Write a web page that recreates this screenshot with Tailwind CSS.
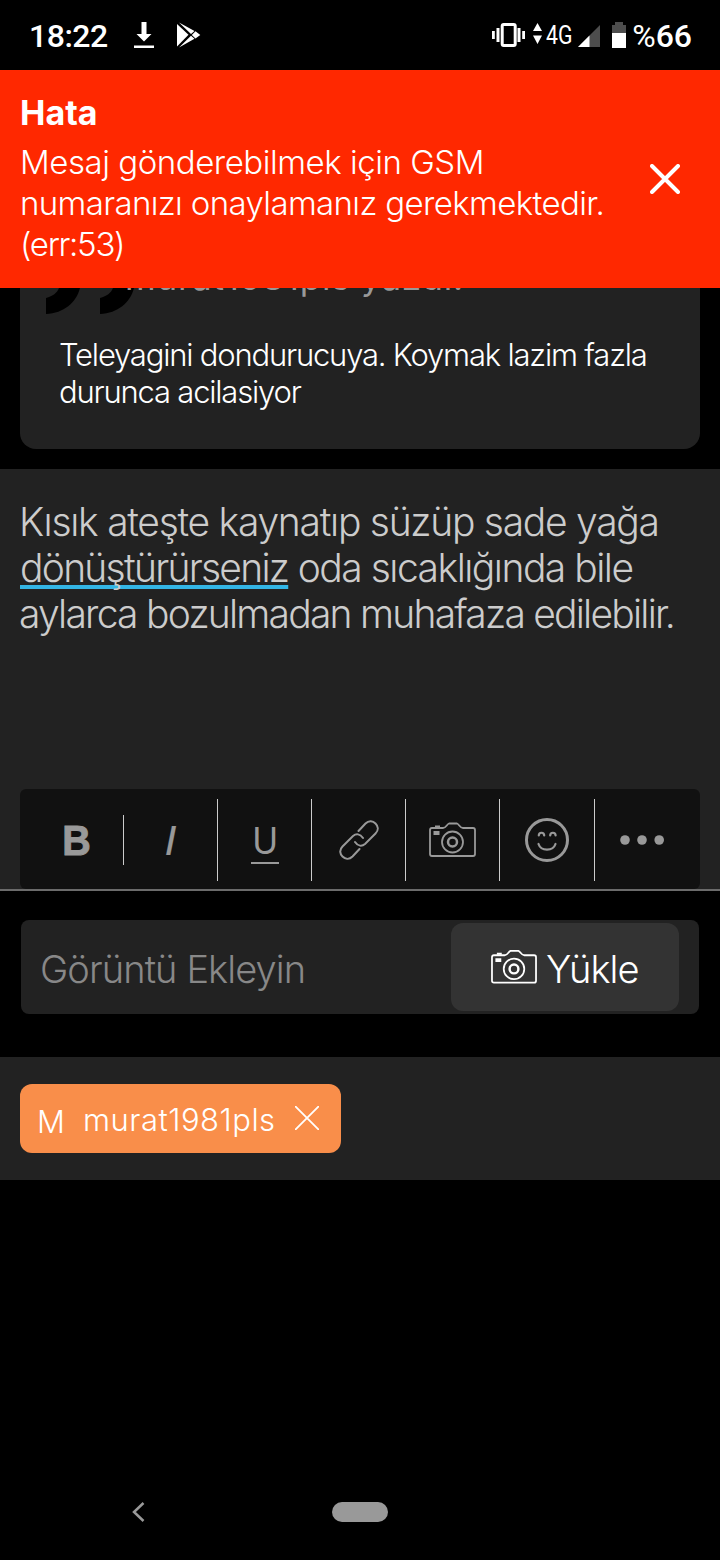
<!DOCTYPE html>
<html lang="tr">
<head>
    <meta charset="UTF-8">
    <meta name="viewport" content="width=device-width, initial-scale=1.0">
    <title>Mesaj Gönder</title>
    <script src="https://cdn.jsdelivr.net/npm/@tailwindcss/browser@4"></script>
</head>
<body class="bg-black font-['Inter','Liberation_Sans',sans-serif] font-light text-white">
<div class="flex flex-col w-[720px] h-[1560px] overflow-hidden bg-black">

    <!-- Status bar -->
    <div class="h-[70px] shrink-0 flex items-center pl-[29px] pr-7 font-['Roboto',sans-serif] font-medium">
        <span class="text-[32px] leading-10 w-[105px] pt-0.5 tracking-[-0.5px]">18:22</span>
        <svg class="w-5 h-7" viewBox="0 0 20 28" fill="#fff"><path d="M7.500 1h5v12h5L10 20.500 2.500 13h5zM0 24.500h20V27H0z"/></svg>
        <svg class="w-6 h-7 ml-[23px]" viewBox="0 0 24 28" fill="#fff"><path d="M0 3l11.500 10.800L0 25.500z"/><path d="M2 1.500l15.500 8.500-3.500 3zM2 26.500l15.500-8.800-3.500-3zM18.500 10.200l4.800 3.700-4.800 3.700-3.700-3.700z"/></svg>
        <div class="ml-auto flex items-center">
            <svg class="w-[33px] h-7" viewBox="0 0 33 28" fill="#fff"><rect x="10.200" y="3.500" width="13" height="21" rx="1.500" fill="none" stroke="#fff" stroke-width="3"/><path d="M4.500 7h3v14h-3zM0 10h2.800v8H0zM25.500 7h3v14h-3zM30.200 10H33v8h-2.800z"/></svg>
            <svg class="w-[9px] h-6 ml-2 -mt-1" viewBox="0 0 9 24" fill="#fff"><path d="M4.500 2l4.500 8H0zM0 14.500h9l-4.500 8.500z"/></svg>
            <span class="ml-1 mt-0.5 w-[30px] text-[25px] font-normal whitespace-nowrap"><span class="inline-block origin-left scale-x-[.85]">4G</span></span>
            <svg class="w-[22px] h-6 ml-0.5 mt-0.5" viewBox="0 0 22 24"><path d="M22 1v22H0z" fill="#4d4d4d"/><path d="M11.500 11.500V23H0z" fill="#fff"/></svg>
            <svg class="w-[14px] h-[26px] ml-3" viewBox="0 0 14 26"><path d="M0 3h3V0h8v3h3v8H0z" fill="#4d4d4d"/><path d="M0 11h14v15H0z" fill="#fff"/></svg>
            <span class="ml-1.5 pt-0.5 text-[32px] leading-10"><span class="inline-block font-normal">%</span>66</span>
        </div>
    </div>

    <!-- Error banner -->
    <div class="h-[218px] shrink-0 flex bg-[#ff2800] pt-[23px] pl-5 pr-10">
        <div class="grow">
            <div class="text-[34px] leading-10 font-bold">Hata</div>
            <div class="mt-[9px] text-[33px] leading-[41px] whitespace-nowrap">
                <span class="block tracking-[-0.46px]">Mesaj gönderebilmek için GSM</span>
                <span class="block tracking-[-0.63px]">numaranızı onaylamanız gerekmektedir.</span>
                <span class="block tracking-[-1.3px]">(err:53)</span>
            </div>
        </div>
        <svg class="w-[30px] h-[30px] mt-[71px]" viewBox="0 0 30 30" fill="none" stroke="#fff" stroke-width="4" stroke-linecap="round"><path d="M2 2l26 26M28 2L2 28"/></svg>
    </div>

    <!-- Quoted post, partly scrolled under the banner -->
    <div class="h-[161px] shrink-0 mx-5 rounded-b-[16px] bg-[#222] overflow-hidden">
        <div class="h-[47px] flex items-start">
            <svg class="w-[92px] h-[27px] ml-[26px] shrink-0" viewBox="0 0 92 27" fill="#000"><path d="M0 26V10c7-2 11-5 13-10h21c-4 15-16 25-34 26zM54 26V10c7-2 11-5 13-10h21c-4 15-16 25-34 26z"/></svg>
            <span class="-ml-[13px] -mt-[29px] text-[35px] leading-[37px] font-normal text-[#999] whitespace-nowrap tracking-[0.8px]">murat1981pls yazdı:</span>
        </div>
        <div class="-ml-px px-10 pt-px text-[31px] leading-[37px] whitespace-nowrap">
            <span class="block tracking-[-1.2px]">Teleyagini dondurucuya. Koymak lazim fazla</span>
            <span class="block tracking-[-1.2px]">durunca acilasiyor</span>
        </div>
    </div>

    <!-- Editor -->
    <div class="h-[422px] shrink-0 mt-5 flex flex-col px-5 bg-[#222] border-b-2 border-[#6b6b6b]">
        <div class="h-[320px] shrink-0 -ml-px pt-[30px] text-[39px] leading-[46px] text-[#ccc] whitespace-nowrap">
            <span class="block tracking-[-1.27px]">Kısık ateşte kaynatıp süzüp sade yağa</span>
            <span class="block tracking-[-1.5px]"><span class="ml-px underline decoration-[#33b5e5] decoration-4 underline-offset-[3px] [text-decoration-skip-ink:none] tracking-[-1.73px]">dönüştürürseniz</span> oda sıcaklığında bile</span>
            <span class="block tracking-[-1.77px]">aylarca bozulmadan muhafaza edilebilir.</span>
        </div>
        <div class="h-[100px] shrink-0 flex items-center pl-[9px] pt-0.5 rounded-md bg-[#111] text-[#999]">
            <div class="w-[95px] h-[50px] flex items-center justify-center border-r border-[#ccc] font-['Liberation_Sans',sans-serif] font-bold text-[43px]">
                <span class="[-webkit-text-stroke:1px_#999] ml-px inline-block scale-x-[.92]">B</span>
            </div>
            <div class="w-[94px] h-[82px] flex items-center justify-center border-r border-[#ccc] font-['Liberation_Sans',sans-serif] font-normal text-[43px] italic">
                <span class="[-webkit-text-stroke:0.2px_#999]">I</span>
            </div>
            <div class="w-[94px] h-[82px] flex items-center justify-center border-r border-[#ccc]">
                <span class="w-7 h-[46px] mt-0.5 text-center border-b-2 border-[#999] font-['Liberation_Sans',sans-serif] font-normal text-[39px] leading-[46px]"><span class="inline-block scale-x-90">U</span></span>
            </div>
            <div class="w-[94px] h-[82px] flex items-center justify-center border-r border-[#ccc]">
                <svg class="w-10 h-10" viewBox="0 0 40 40" fill="none" stroke="#999" stroke-width="2" stroke-linecap="round"><path d="M20.500 29L13.500 36.500C10 40 6 39 3.500 36.500S0 30 3.500 26.500L14 16C17 13.500 21 13.500 24 18M19.500 11L26.500 3.500C30 0 34 1 36.500 3.500S40 10 36.500 13.500L26 24C23 26.500 19 26.500 16 22"/></svg>
            </div>
            <div class="w-[94px] h-[82px] flex items-center justify-center border-r border-[#ccc]">
                <svg class="w-[47px] h-[35px] -mt-0.5" viewBox="0 0 47 35" fill="none" stroke="#999" stroke-width="1.800"><path d="M3 6h11c3 0 4-4 6-4.500h8c2 .5 3 4.500 6 4.500h10q2 0 2 2v24q0 2-2 2H3q-2 0-2-2V8q0-2 2-2z"/><circle cx="23.500" cy="20" r="10.500"/><circle cx="23.500" cy="20" r="4.500" stroke-width="2.500"/><path d="M4.500 9h6v4h-6zM6 3.500h5v2H6z" fill="#999" stroke="none"/></svg>
            </div>
            <div class="w-[95px] h-[82px] flex items-center justify-center border-r border-[#ccc]">
                <svg class="w-11 h-11" viewBox="0 0 44 44" fill="none" stroke="#999" stroke-width="2.200" stroke-linecap="round"><circle cx="22" cy="22" r="20.500" stroke-width="3"/><path d="M13.800 17.500c0-3.700 5.400-3.700 5.400 0M25.200 17.500c0-3.700 5.400-3.700 5.400 0M13.500 26c2.500 7.500 14.500 7.500 17 0"/></svg>
            </div>
            <svg class="w-11 h-3 ml-[25px]" viewBox="0 0 44 12" fill="#999"><circle cx="5" cy="6" r="4.800"/><circle cx="22" cy="6" r="4.800"/><circle cx="39.200" cy="6" r="4.800"/></svg>
        </div>
    </div>

    <!-- Image upload -->
    <div class="h-[94px] shrink-0 mt-[29px] mx-[21px] flex items-center justify-between pl-[19px] pr-5 rounded-lg bg-[#222]">
        <span class="text-[38px] text-[#888] tracking-[-0.9px] pt-1">Görüntü Ekleyin</span>
        <div class="w-[228px] h-[88px] flex items-center pl-10 rounded-xl bg-[#333]">
            <svg class="w-[46px] h-[35px] -mt-0.5" viewBox="0 0 47 35" fill="none" stroke="#fff" stroke-width="1.800"><path d="M3 6h11c3 0 4-4 6-4.500h8c2 .5 3 4.500 6 4.500h10q2 0 2 2v24q0 2-2 2H3q-2 0-2-2V8q0-2 2-2z"/><circle cx="23.500" cy="20" r="10.500"/><circle cx="23.500" cy="20" r="4.500" stroke-width="2.500"/><path d="M4.500 9h6v4h-6zM6 3.500h5v2H6z" fill="#fff" stroke="none"/></svg>
            <span class="ml-[9px] pt-[5px] text-[38px] tracking-[-0.9px]">Yükle</span>
        </div>
    </div>

    <!-- Recipients -->
    <div class="h-[123px] shrink-0 mt-[43px] px-5 flex items-center bg-[#222]">
        <div class="w-[321px] h-[69px] flex items-center pl-[17px] rounded-[12px] bg-[#f98e4a]">
            <span class="w-[46px] text-[31px] pt-[7px]">M</span>
            <span class="w-[212px] text-[31px] tracking-[0.5px] pt-[3px]">murat1981pls</span>
            <svg class="w-6 h-6 -mt-px" viewBox="0 0 24 24" fill="none" stroke="#fff" stroke-width="1.800"><path d="M0 0l24 24M24 0L0 24"/></svg>
        </div>
    </div>

    <!-- Navigation bar -->
    <div class="mt-auto h-24 shrink-0 flex items-center pl-[132px]">
        <svg class="w-[13px] h-5" viewBox="0 0 13 20" fill="none" stroke="#999" stroke-width="2.500"><path d="M11.500 1L2 10l9.500 9"/></svg>
        <span class="w-14 h-5 ml-[187px] rounded-full bg-[#999]"></span>
    </div>
</div>
</body>
</html>
